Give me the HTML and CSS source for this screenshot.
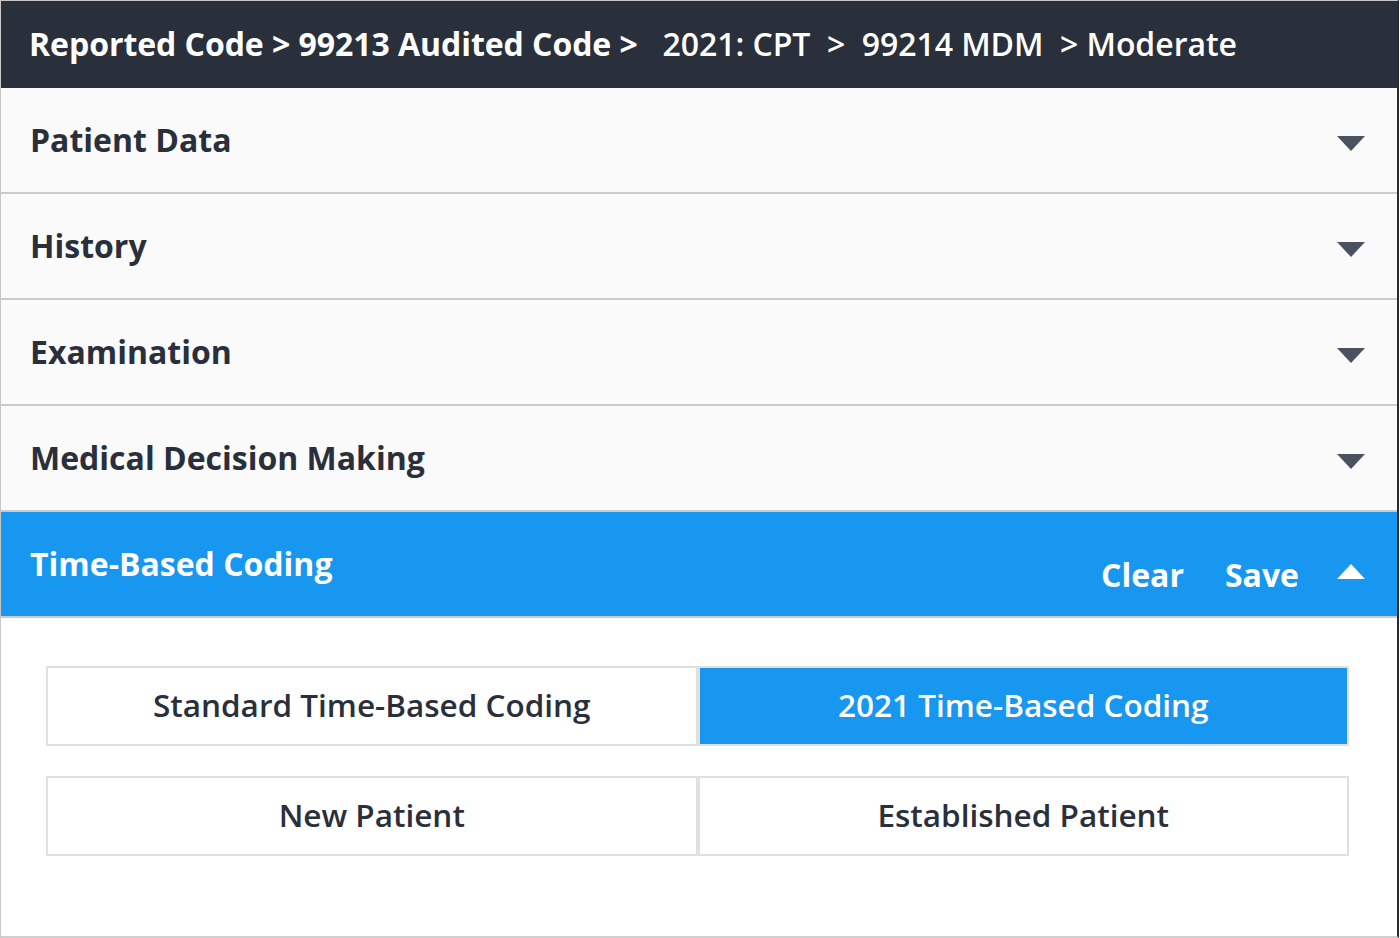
FILE: index.html
```html
<!DOCTYPE html>
<html>
<head>
<meta charset="utf-8">
<link rel="stylesheet" href="styles.css">
</head>
<body>
<div class="panel">
  <div class="crumbs"><span class="b">Reported Code &gt; 99213 Audited Code &gt;</span><span class="s">&nbsp;&nbsp; 2021: CPT &nbsp;&gt;&nbsp; 99214 MDM &nbsp;&gt; Moderate</span></div>
  <div class="row"><span class="title">Patient Data</span><svg class="tri" viewBox="0 0 28 15"><polygon points="0,0 28,0 14,15"/></svg></div>
  <div class="row"><span class="title">History</span><svg class="tri" viewBox="0 0 28 15"><polygon points="0,0 28,0 14,15"/></svg></div>
  <div class="row"><span class="title">Examination</span><svg class="tri" viewBox="0 0 28 15"><polygon points="0,0 28,0 14,15"/></svg></div>
  <div class="row"><span class="title">Medical Decision Making</span><svg class="tri" viewBox="0 0 28 15"><polygon points="0,0 28,0 14,15"/></svg></div>
  <div class="row active"><span class="title">Time-Based Coding</span>
    <div class="actions"><span class="act">Clear</span><span class="act">Save</span><svg class="tri up" viewBox="0 0 28 15"><polygon points="0,15 28,15 14,0"/></svg></div>
  </div>
  <div class="content">
    <div class="seg">
      <div class="opt">Standard Time-Based Coding</div>
      <div class="opt on">2021 Time-Based Coding</div>
    </div>
    <div class="seg">
      <div class="opt">New Patient</div>
      <div class="opt">Established Patient</div>
    </div>
  </div>
</div>
</body>
</html>
```
FILE: styles.css
```css
html, body { margin: 0; padding: 0; background: #fff; }
body { font-family: "Open Sans", "Noto Sans", sans-serif; }
.panel {
  width: 1399px; height: 938px; box-sizing: border-box;
  border-left: 1px solid #c8c8c8; border-right: 2px solid #2b2b2b;
  border-bottom: 2px solid #cfcfcf; border-top: 1px solid #c8c8c8;
  background: #fff;
}
.crumbs {
  height: 87px; box-sizing: border-box; padding-bottom: 2px;
  background: #2a303b; color: #fff;
  display: flex; align-items: center; padding-left: 28px;
  font-size: 32px; white-space: pre; letter-spacing: -0.05px;
}
.crumbs .b { font-weight: 700; }
.crumbs .s { font-weight: 600; }
.row {
  height: 104px; border-bottom: 2px solid #cbcbcb; background: #fafafa;
  display: flex; align-items: center; justify-content: space-between;
  padding: 0 32px 0 29px;
}
.title { font-size: 32px; font-weight: 700; color: #2a303b; margin-bottom: 2px; }
.tri { width: 28px; height: 15px; fill: #4a5260; margin-top: 6px; }
.row.active { background: #1897f0; }
.row.active .title { color: #fff; }
.actions { display: flex; align-items: center; gap: 41px; margin-top: 20px; }
.act { font-size: 32px; font-weight: 700; color: #fff; }
.act + .tri { margin-left: -3px; }
.tri.up { fill: #fff; margin-top: -6px; }
.content { padding: 48px 48px 0 45px; display: flex; flex-direction: column; gap: 30px; }
.seg { display: flex; }
.opt {
  flex: 1; height: 73px; padding-bottom: 3px;
  border: 2px solid #e0e0e0; background: #fff;
  display: flex; align-items: center; justify-content: center;
  font-size: 31.5px; font-weight: 600; color: #2a303b;
}
.opt.on { background: #1897f0; color: #fff; }
```
